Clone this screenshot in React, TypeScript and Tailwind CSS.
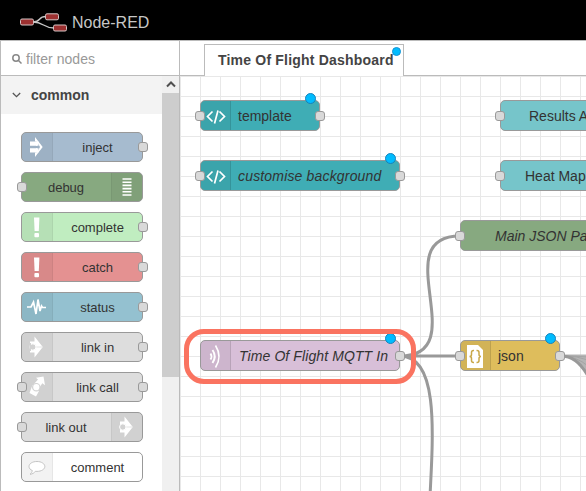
import React from "react";

type IconName = "inject" | "debug" | "alert" | "status" | "linkIn" | "linkCall" | "linkOut" | "comment" | "template" | "mqtt" | "json";

function Icon({ name }: { name: IconName }) {
  const p = { width: 30, height: 28, viewBox: "0 0 30 28", className: "block shrink-0" };
  switch (name) {
    case "inject":
      return <svg {...p} fill="#fff"><path d="M8 8.500h7v4.300H8zM8 15.200h7v4.300H8z" /><path d="M13 4l7.700 10L13 24v-4.500h2L18 14l-3-5.500h-2z" /><path d="M14 8.500h2.500v4.300H14zM14 15.200h2.500v4.300H14z" /></svg>;
    case "debug":
      return <svg {...p} stroke="#fff" strokeWidth="1.600"><path d="M10.500 6h9M10.500 9.200h9M10.500 12.400h9M10.500 15.600h9M10.500 18.800h9M10.500 22h9" /></svg>;
    case "alert":
      return <svg {...p} fill="#fff"><path d="M12 4.500h5.400l-.6 13.500h-4.200z" /><rect x="12.400" y="20" width="4.600" height="4.200" rx="1" /></svg>;
    case "status":
      return <svg {...p} fill="none" stroke="#fff" strokeWidth="1.700" strokeLinejoin="miter"><path d="M5 14h4l2.500-5 2.500 12L16 6.500 18 18l1.500-5 1 1.500H24" /></svg>;
    case "linkIn":
      return <svg {...p} fill="#fff"><path d="M12.500 3.500l7.500 9.500h-5.500L12 12H8V8.500h4.500zM12.500 24.500L20 15h-5.500L12 16H8v3.500h4.500z" /><path d="M14 13.300h6.500v1.400H14z" /><circle cx="10.800" cy="14" r="3.200" fill="#d2d2d2" stroke="#fff" strokeWidth="1" /><path d="M7.400 10h1.600v8H7.400z" fill="#d2d2d2" /></svg>;
    case "linkCall":
      return <svg {...p} fill="#fff"><path d="M14 4.800l7.500-1.300 1.500 8.700-2.700-2-2.800 4.300-5.500-3.500 4-4.500z" /><path d="M10.500 12l6.500 6-3 5.500-6.500-3.500z" /><circle cx="14.300" cy="14.200" r="3.700" fill="#fff" stroke="#d2d2d2" strokeWidth="1.200" /></svg>;
    case "linkOut":
      return <svg {...p} fill="#fff"><path d="M12.500 3.500l7.500 9.500h-5.500L12 12H8V8.500h4.500zM12.500 24.500L20 15h-5.500L12 16H8v3.500h4.500z" /><path d="M14 13.300h6.500v1.400H14z" /><circle cx="10.800" cy="14" r="3.200" fill="#d2d2d2" stroke="#fff" strokeWidth="1" /></svg>;
    case "comment":
      return <svg {...p} fill="#fff" stroke="#bdbdbd" strokeWidth=".9"><path d="M15 8.500c-4.600 0-8 2.200-8 5 0 1.800 1.300 3.200 3.300 4-.2 1.600-1 2.800-2.300 3.800 2.600-.3 4.300-1.300 5.300-3 .600.100 1.100.1 1.700.1 4.500 0 7.800-2.200 7.800-4.900s-3.300-5-7.800-5z" /></svg>;
    case "template":
      return <svg {...p} fill="none" stroke="#fff" strokeWidth="1.700"><path d="M11.500 9.500l-5 5 5 5M18.500 9.500l5 5-5 5M17 8.500l-3.500 13" /></svg>;
    case "mqtt":
      return <svg {...p} fill="none" stroke="#fff"><path d="M9.500 11.500q2 3 0 6" strokeWidth="1.800" /><path d="M11.500 8q4.500 6.500 0 13" strokeWidth="1.900" /><path d="M14.500 3.500q7 11 0 22" strokeWidth="1.600" /></svg>;
    case "json":
      return <svg {...p}><path d="M6 3h11l5 5v18H6z" fill="#fff" /><path d="M13 8.500h-.5q-2 0-2 2v2q0 2-2 2 2 0 2 2v2q0 2 2 2h.5M15.500 8.500h.5q2 0 2 2v2q0 2 2 2-2 0-2 2v2q0 2-2 2h-.5" fill="none" stroke="#c9a849" strokeWidth="1.500" /></svg>;
  }
}

const port = "size-[10px] rounded-[3px] border border-[#999] bg-[#d9d9d9]";

const palette: { label: string; color: string; icon: IconName; left?: boolean; right?: boolean; end?: boolean }[] = [
  { label: "inject", color: "bg-[#a6bbcf]", icon: "inject", right: true },
  { label: "debug", color: "bg-[#87a980]", icon: "debug", left: true, end: true },
  { label: "complete", color: "bg-[#c0edc0]", icon: "alert", right: true },
  { label: "catch", color: "bg-[#e49191]", icon: "alert", right: true },
  { label: "status", color: "bg-[#94c1d0]", icon: "status", right: true },
  { label: "link in", color: "bg-[#dddddd]", icon: "linkIn", right: true },
  { label: "link call", color: "bg-[#dddddd]", icon: "linkCall", left: true, right: true },
  { label: "link out", color: "bg-[#dddddd]", icon: "linkOut", left: true, end: true },
  { label: "comment", color: "bg-white", icon: "comment" },
];

function Palette() {
  return (
    <aside className="flex w-[180px] shrink-0 flex-col border-x border-[#bbb] bg-white">
      <div className="flex h-[35px] shrink-0 items-center border-b border-[#bbb] pl-[11px] pt-[2px] text-[14px] tracking-[0.05px] text-[#999]">
        <svg width="10" height="10" viewBox="0 0 10 10" fill="none" stroke="#888" strokeWidth="1.500" className="mr-[4px]">
          <circle cx="4" cy="4" r="3.200" /><path d="M6.500 6.500l3 3" />
        </svg>
        filter nodes
      </div>
      <div className="flex min-h-0 flex-1">
        <div className="flex-1">
          <div className="flex h-[38px] items-center bg-[#f3f3f3] pl-[11px] text-[14px] font-bold text-[#444]">
            <svg width="9" height="6" viewBox="0 0 9 6" fill="none" stroke="#555" strokeWidth="1.300" className="mr-[10px]"><path d="M.8 1l3.700 3.700L8.200 1" /></svg>
            common
          </div>
          <div className="flex flex-col gap-[10px] pl-[20px] pt-[18px]">
            {palette.map((n) => (
              <div key={n.label} className={`relative flex h-[30px] w-[122px] items-center rounded-[5px] border border-[#999] text-[13px] text-[#333] ${n.color} ${n.end ? "flex-row-reverse" : ""}`}>
                <div className={`flex h-[28px] w-[31px] items-center bg-black/5 ${n.end ? "rounded-r-[4px] border-l" : "rounded-l-[4px] border-r"} border-black/5`}>
                  <Icon name={n.icon} />
                </div>
                <span className={`flex-1 pt-[1px] text-center leading-[28px] ${n.end ? "pr-px" : ""}`}>{n.label}</span>
                {n.left && <i className={`absolute -left-[5px] top-[9px] ${port}`} />}
                {n.right && <i className={`absolute -right-[6px] top-[9px] ${port}`} />}
              </div>
            ))}
          </div>
        </div>
        <div className="w-[17px] bg-[#f0f0f0]">
          <div className="flex h-[17px] items-center justify-center">
            <svg width="10" height="7" viewBox="0 0 10 7" fill="none" stroke="#505050" strokeWidth="2"><path d="M1 5.500l4-4 4 4" /></svg>
          </div>
          <div className="h-[284px] bg-[#cdcdcd]" />
        </div>
      </div>
    </aside>
  );
}

interface FlowNode { label: string; box: string; color: string; text: string; icon?: IconName; left?: boolean; right?: boolean; changed?: boolean }

const flow: FlowNode[] = [
  { label: "template", box: "left-[20px] top-[24px] w-[120px]", color: "bg-[#3fadb5]", text: "left-[37px]", icon: "template", left: true, right: true, changed: true },
  { label: "customise background", box: "left-[20px] top-[84px] w-[200px]", color: "bg-[#3fadb5]", text: "left-[37px] italic tracking-[0.17px]", icon: "template", left: true, right: true, changed: true },
  { label: "Results A", box: "left-[320px] top-[24px] w-[160px]", color: "bg-[#76c5ca]", text: "left-[28px]", left: true },
  { label: "Heat Map", box: "left-[320px] top-[84px] w-[160px]", color: "bg-[#76c5ca]", text: "left-[24px]", left: true },
  { label: "Main JSON Pa", box: "left-[280px] top-[144px] w-[200px]", color: "bg-[#87a980]", text: "left-[34px] italic", left: true },
  { label: "Time Of Flight MQTT In", box: "left-[20px] top-[264px] w-[200px]", color: "bg-[#d8bfd8]", text: "left-[38px] italic tracking-[0.1px]", icon: "mqtt", right: true, changed: true },
  { label: "json", box: "left-[280px] top-[264px] w-[100px]", color: "bg-[#debd5c]", text: "left-[37px]", icon: "json", left: true, right: true, changed: true },
];

function Workspace() {
  return (
    <div className="relative min-h-0 flex-1 overflow-hidden bg-white bg-[linear-gradient(to_right,#e8e8e8_1px,transparent_1px),linear-gradient(to_bottom,#e8e8e8_1px,transparent_1px)] bg-[size:20px_20px]">
      <svg className="absolute inset-0" width="406" height="415" viewBox="180 76 406 415" fill="none" stroke="#999" strokeWidth="3">
        <path d="M400 356C475 356 385 236 460 236M400 356H460M400 356C475 356 385 636 460 636" />
        <path d="M564 354.500H586V374Q577 358 564 357z" fill="#b5b5b5" stroke="none" />
        <path d="M564 356Q577 356 588 360M564 356Q577 357 588 366M564 355.500L588 357" stroke="#a0a0a0" strokeWidth=".8" />
        <path d="M560 356C572 356 580 362 588 376" />
      </svg>
      {flow.map((n) => (
        <div key={n.label} className={`absolute h-[31px] rounded-[5px] border border-[#999] ${n.box} ${n.color}`}>
          {n.icon && <div className="flex h-[29px] w-[30px] items-center rounded-l-[4px] border-r border-black/10 bg-black/5"><Icon name={n.icon} /></div>}
          <span className={`absolute top-0 whitespace-nowrap text-[14px] leading-[30px] text-[#333] ${n.text}`}>{n.label}</span>
          {n.left && <i className={`absolute -left-[6px] top-[10px] ${port}`} />}
          {n.right && <i className={`absolute -right-[6px] top-[10px] ${port}`} />}
          {n.changed && <i className="absolute -top-[8px] right-[3px] size-[11px] rounded-full border border-[#1583bd] bg-[#00bcff]" />}
        </div>
      ))}
      <div className="absolute left-[4px] top-[253px] h-[55px] w-[232px] rounded-[20px] border-[5px] border-[#fa7360]" />
    </div>
  );
}

export default function App() {
  return (
    <div className="flex h-[491px] w-[586px] flex-col overflow-hidden bg-white font-['Liberation_Sans',Arial,sans-serif]">
      <header className="flex h-[40px] shrink-0 items-center bg-black pl-[20px] pt-[5px] text-[16px] text-[#c7c7c7]">
        <svg width="47" height="20" viewBox="0 0 47 20" className="mr-[5px]">
          <path d="M13 9C22 9 17 3.500 26 3.500M13 9C24 9 23 15 34 15" fill="none" stroke="#c7c7c7" strokeWidth="1.300" />
          <g fill="#9c3030" stroke="#d5c5c5" strokeWidth="1"><rect x=".5" y="6" width="13" height="6" rx="1.500" /><rect x="25.500" y=".8" width="13" height="6" rx="1.500" /><rect x="33.500" y="12" width="13" height="6" rx="1.500" /></g>
        </svg>
        Node-RED
      </header>
      <div className="flex min-h-0 flex-1 border-t border-[#bbb]">
        <Palette />
        <main className="flex min-w-0 flex-1 flex-col">
          <div className="flex h-[35px] shrink-0">
            <div className="w-[24px] border-b border-[#bbb]" />
            <div className="relative mt-[3px] w-[200px] whitespace-nowrap border-x border-t border-[#bbb] pl-[13px] text-[14px] font-bold leading-[31px] tracking-[0.2px] text-[#444]">
              Time Of Flight Dashboard
              <i className="absolute right-[2px] top-[2px] size-[9px] rounded-full border border-[#1593d2] bg-[#00bcff]" />
            </div>
            <div className="flex-1 border-b border-[#bbb]" />
          </div>
          <Workspace />
        </main>
      </div>
    </div>
  );
}
